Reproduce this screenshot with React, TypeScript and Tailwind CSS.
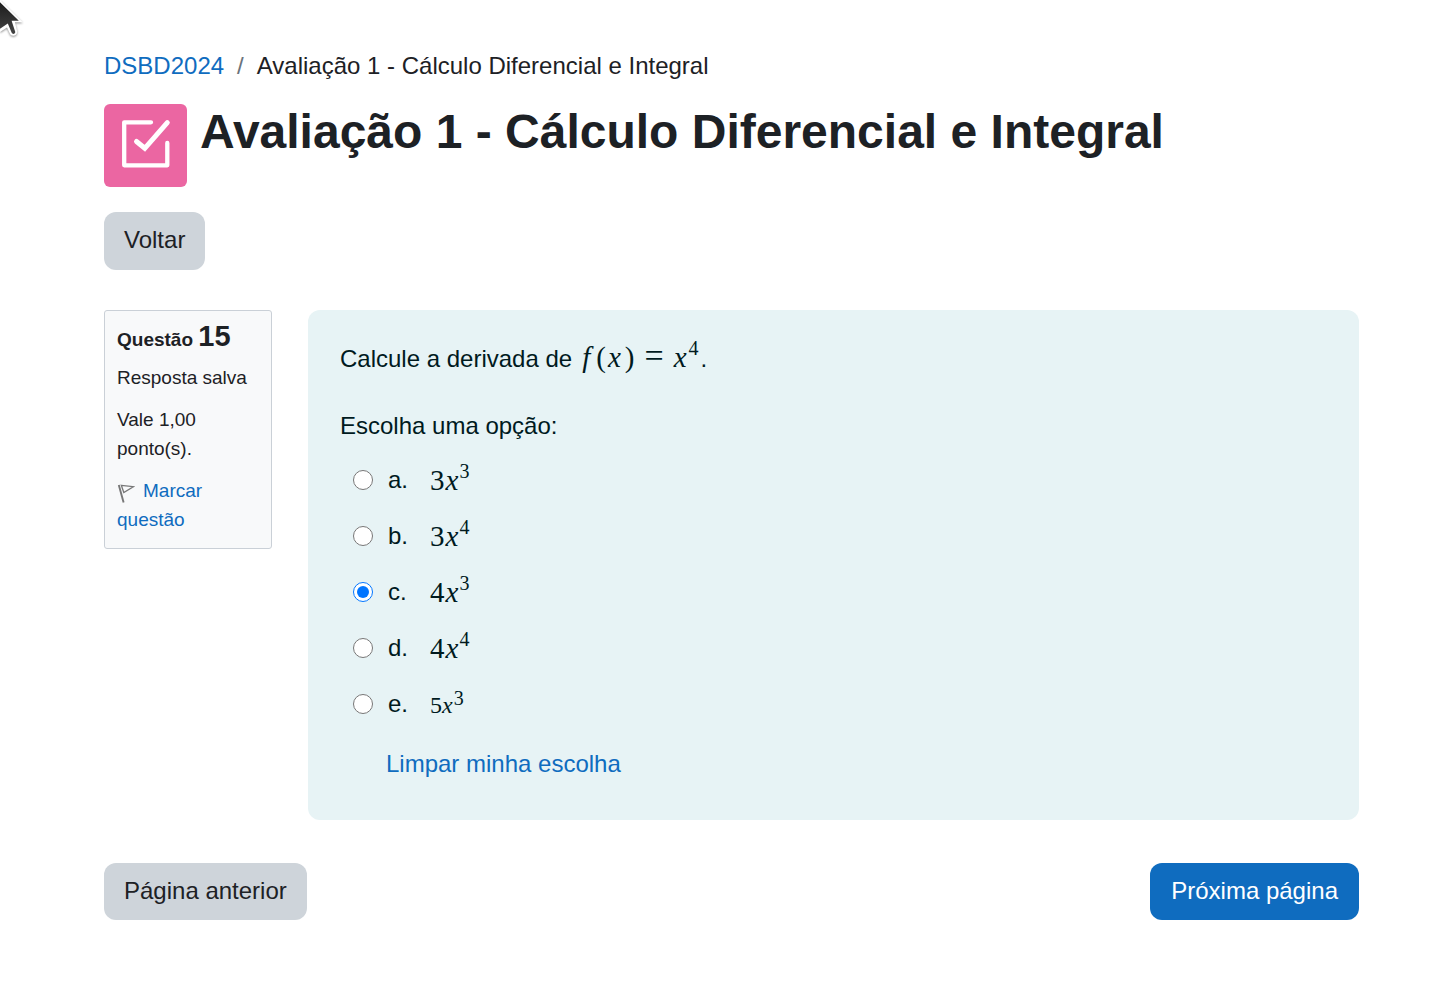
import { useState } from "react";
import type { ReactNode } from "react";

function Term({ coef, power, compact = false }: { coef: string; power: string; compact?: boolean }) {
  return (
    <span
      className={
        compact
          ? "pt-0.5 font-['Liberation_Serif',serif] text-[24px] leading-9"
          : "font-['Liberation_Serif',serif] text-[29px] leading-9"
      }
    >
      {coef}
      <i className={compact ? "pr-px" : "px-px"}>x</i>
      <sup className={compact ? "top-0 align-[8px] text-[20px]" : "top-0 align-[12px] text-[20px]"}>{power}</sup>
    </span>
  );
}

const options: { id: string; term: ReactNode }[] = [
  { id: "a", term: <Term coef="3" power="3" /> },
  { id: "b", term: <Term coef="3" power="4" /> },
  { id: "c", term: <Term coef="4" power="3" /> },
  { id: "d", term: <Term coef="4" power="4" /> },
  { id: "e", term: <Term coef="5" power="3" compact /> },
];

export default function App() {
  const [choice, setChoice] = useState("c");
  return (
    <div className="relative min-h-screen bg-white pt-12 pr-[93px] pb-[75px] pl-[104px] font-['Liberation_Sans',Arial,sans-serif] text-2xl leading-9 text-[#1d2125]">
      <svg className="absolute top-0 left-0 h-10 w-6 drop-shadow-[0_1px_1px_rgba(0,0,0,0.45)]" viewBox="0 0 24 40" aria-hidden="true">
        <defs>
          <linearGradient id="pointer" x1="0" y1="0" x2="0" y2="1">
            <stop offset="0" stopColor="#1c1c1c" />
            <stop offset="1" stopColor="#444" />
          </linearGradient>
        </defs>
        <path d="M0 0L22.7 22.2H15L17.2 31.5C17.8 35.8 11.5 37.4 9.8 33.6L7 27.5L0 32Z" fill="#fff" />
        <path d="M0 2.2L18.8 20.7H11.6L15.2 31.8C15.6 34 12.6 34.8 11.7 32.8L7.8 23.6L0 28.8Z" fill="url(#pointer)" />
      </svg>

      <nav aria-label="Trilha">
        <ol className="flex flex-wrap">
          <li>
            <a href="#curso" className="text-[#0f6cbf]">DSBD2024</a>
          </li>
          <li className="px-[13px] text-[#6a737b]" aria-hidden="true">/</li>
          <li>Avaliação 1 - Cálculo Diferencial e Integral</li>
        </ol>
      </nav>

      <header className="mt-5 flex items-start gap-[13px]">
        <div className="flex size-[83px] shrink-0 items-center justify-center rounded-md bg-[#eb66a2]">
          <svg className="size-[83px]" viewBox="0 0 83 83" fill="none" stroke="#fff" strokeLinecap="round" aria-hidden="true">
            <path d="M47 18.3H20.2V61.3H63.3V39" strokeWidth="4.3" strokeLinejoin="round" />
            <path d="M32.5 37.5L40.8 44.3L63.3 18.7" strokeWidth="5" strokeLinejoin="miter" />
          </svg>
        </div>
        <h1 className="text-5xl leading-[56px] font-bold">Avaliação 1 - Cálculo Diferencial e Integral</h1>
      </header>

      <button type="button" className="mt-[25px] flex h-[58px] items-center rounded-xl bg-[#ced4da] px-5 pb-0.5">Voltar</button>

      <main className="mt-10 flex items-start gap-9">
        <aside className="w-[168px] shrink-0 rounded-[3px] border border-[#cad0d7] bg-[#f8f9fa] px-3 pt-[7px] pb-3.5 text-[19px] leading-[29px]">
          <h2 className="leading-9 font-bold">
            Questão <span className="text-[29px]">15</span>
          </h2>
          <p className="mt-[5px]">Resposta salva</p>
          <p className="mt-[13px]">Vale 1,00 ponto(s).</p>
          <a href="#marcar" className="mt-[13px] block text-[#0f6cbf]">
            <svg className="mr-2 inline-block h-5 w-[18px] align-[-6px]" viewBox="0 0 18 20" fill="none" stroke="#777" aria-hidden="true">
              <path d="M1.8 2L6.6 19.5" strokeWidth="1.9" />
              <path d="M4.3 2.3L16.3 3.7L6.8 9.5Z" strokeWidth="1.3" />
            </svg>
            Marcar questão
          </a>
        </aside>

        <section className="min-w-0 flex-1 rounded-xl bg-[#e7f3f5] px-8 pt-7 pb-[38px] text-[#001a1e]">
          <p className="flex flex-wrap items-baseline">
            <span>Calcule a derivada de</span>
            <span className="flex items-baseline pl-2.5 font-['Liberation_Serif',serif] text-[29px]">
              <i className="pr-1.5">f</i>
              <span>(</span>
              <i className="px-0.5">x</i>
              <span className="pl-0.5">)</span>
              <span className="px-2.5 text-[34px] leading-9">=</span>
              <span>
                <i className="pr-0.5">x</i>
                <sup className="top-0 align-[12px] text-[20px]">4</sup>
              </span>
            </span>
            <span className="pl-0.5">.</span>
          </p>

          <fieldset className="mt-[31px]">
            <legend>Escolha uma opção:</legend>
            <div className="mt-2 pl-[13px]">
              {options.map(({ id, term }) => (
                <label key={id} htmlFor={`option-${id}`} className="flex h-14 items-center">
                  <input
                    id={`option-${id}`}
                    type="radio"
                    name="answer"
                    value={id}
                    checked={choice === id}
                    onChange={() => setChoice(id)}
                    className="size-5 shrink-0"
                  />
                  <span className="w-[57px] pl-[15px]">{id}.</span>
                  {term}
                </label>
              ))}
            </div>
          </fieldset>
          <button type="button" onClick={() => setChoice("")} className="mt-3.5 ml-[46px] block text-[#0f6cbf]">
            Limpar minha escolha
          </button>
        </section>
      </main>

      <div className="mt-[43px] flex flex-wrap justify-between gap-4">
        <button type="button" className="flex h-[57px] items-center rounded-xl bg-[#ced4da] px-5 pb-0.5">Página anterior</button>
        <button type="button" className="flex h-[57px] items-center rounded-xl bg-[#0f6cbf] px-[21px] pb-0.5 text-white">Próxima página</button>
      </div>
    </div>
  );
}
